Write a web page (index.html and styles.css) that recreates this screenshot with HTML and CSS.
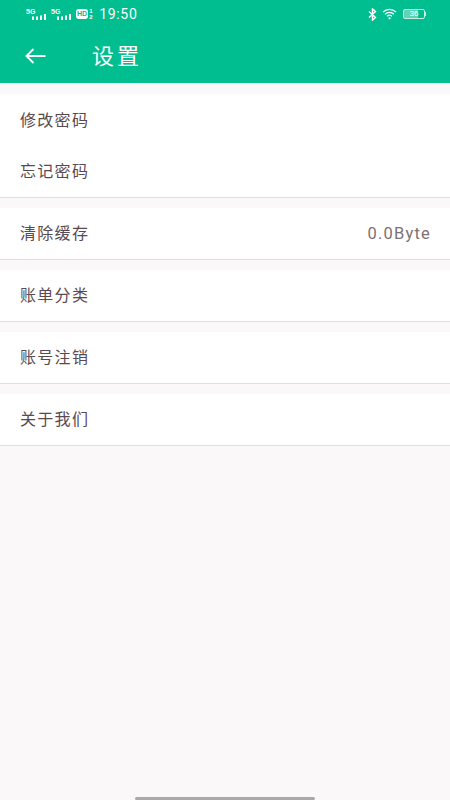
FILE: index.html
```html
<!DOCTYPE html>
<html>
<head>
    <meta charset="utf-8">
    <link rel="stylesheet" href="styles.css">
</head>
<body>
    <header>
        <div class="status-bar">
            <div class="status-left">
                <div class="signal">
                    <span class="signal-label">5G</span>
                    <svg width="14" height="6" viewBox="0 0 14 6"><path d="M0 2.5h2V6H0zM4 2.5h2V6H4zM8 1.5h2V6H8zM12 0h2v6h-2z" fill="#fff"/></svg>
                </div>
                <div class="signal">
                    <span class="signal-label">5G</span>
                    <svg width="14" height="6" viewBox="0 0 14 6"><path d="M0 2.5h2V6H0zM4 2.5h2V6H4zM8 1.5h2V6H8zM12 0h2v6h-2z" fill="#fff"/></svg>
                </div>
                <span class="hd">HD</span>
                <span class="sim">1<br>2</span>
                <span class="time">19:50</span>
            </div>
            <div class="status-right">
                <svg width="9" height="13" viewBox="0 0 9 13"><path d="M1 3.5l6.5 6L4.5 12V1l3 2.5L1 9.5" fill="none" stroke="#fff" stroke-width="1.4"/></svg>
                <svg width="15" height="12" viewBox="0 0 16 12"><path d="M1 4a10 10 0 0 1 14 0M3.2 6.2a7 7 0 0 1 9.6 0M5.4 8.4a4 4 0 0 1 5.2 0" fill="none" stroke="#fff" stroke-width="1.3"/><circle cx="8" cy="10.6" r="1.2" fill="#fff"/></svg>
                <div class="battery"><span class="battery-level">36</span></div>
                <span class="battery-cap"></span>
            </div>
        </div>
        <div class="toolbar">
            <svg class="back" width="21" height="16" viewBox="0 0 21 16"><path d="M20.5 8H1.5M8.5 1L1.5 8l7 7" fill="none" stroke="#fff" stroke-width="1.9"/></svg>
            <span class="title">设置</span>
        </div>
    </header>

    <div class="group first">
        <div class="row"><span class="label">修改密码</span></div>
        <div class="row"><span class="label">忘记密码</span></div>
    </div>
    <div class="group">
        <div class="row"><span class="label">清除缓存</span><span class="value">0.0Byte</span></div>
    </div>
    <div class="group">
        <div class="row"><span class="label">账单分类</span></div>
    </div>
    <div class="group">
        <div class="row"><span class="label">账号注销</span></div>
    </div>
    <div class="group">
        <div class="row"><span class="label">关于我们</span></div>
    </div>

    <div class="home-indicator"></div>
</body>
</html>
```

FILE: styles.css
```css
body {
    margin: 0;
    padding: 0;
    height: 800px;
    position: relative;
    overflow: hidden;
    background-color: #faf8f9;
    font-family: "Noto Sans CJK SC", "Noto Sans", sans-serif;
}

header {
    height: 83px;
    background-color: #00be90;
    color: white;
}

.status-bar {
    height: 28px;
    padding: 0 24px 0 26px;
    display: flex;
    justify-content: space-between;
    align-items: center;
}

.status-left {
    display: flex;
    align-items: center;
    gap: 5px;
}

.signal {
    width: 20px;
    height: 12px;
    position: relative;
}

.signal svg {
    position: absolute;
    right: 0;
    bottom: 0;
}

.signal-label {
    display: block;
    font-family: "Liberation Sans", sans-serif;
    font-size: 7px;
    font-weight: 700;
    line-height: 7px;
}

.hd {
    font-family: "Liberation Sans", sans-serif;
    font-size: 7px;
    font-weight: 700;
    line-height: 10px;
    color: #00be90;
    background-color: white;
    border-radius: 3px;
    padding: 0 1px;
}

.sim {
    font-family: "Liberation Sans", sans-serif;
    font-size: 6px;
    font-weight: 700;
    line-height: 6px;
    margin-left: -4px;
    width: 4px;
}

.time {
    font-family: "Roboto", sans-serif;
    font-size: 14px;
    letter-spacing: 0.7px;
    margin-left: 1px;
}

.status-right {
    display: flex;
    align-items: center;
    gap: 5px;
}

.battery {
    width: 20px;
    height: 8px;
    border: 1px solid #c5efe3;
    border-radius: 2px;
    margin-left: 1px;
    display: flex;
    align-items: center;
    justify-content: center;
    background: linear-gradient(to right, #5fd3b6 70%, transparent 70%);
}

.battery-level {
    font-family: "Liberation Sans", sans-serif;
    font-size: 8px;
    line-height: 8px;
}

.battery-cap {
    width: 1px;
    height: 4px;
    margin-left: -5px;
    background-color: #c5efe3;
}

.toolbar {
    height: 55px;
    padding-left: 25px;
    display: flex;
    align-items: center;
}

.title {
    font-size: 22px;
    letter-spacing: 3px;
    margin-left: 46px;
    margin-bottom: 4px;
}

.group {
    background-color: white;
    border-bottom: 1px solid #e0dfdf;
    margin-top: 10px;
}

.group.first {
    margin-top: 11px;
    padding-top: 1px;
}

.row {
    height: 51px;
    padding: 0 20px;
    display: flex;
    justify-content: space-between;
    align-items: center;
    font-size: 16px;
    color: #5a4a4f;
}

.label {
    letter-spacing: 1.3px;
    margin-bottom: 4px;
}

.value {
    font-family: "Roboto", sans-serif;
    color: #7d7175;
    font-size: 16.5px;
    letter-spacing: 1.2px;
    margin-right: -1px;
}

.home-indicator {
    position: absolute;
    left: 135px;
    bottom: 0;
    width: 180px;
    height: 3px;
    border-radius: 2px;
    background-color: #aaa8a9;
}
```
